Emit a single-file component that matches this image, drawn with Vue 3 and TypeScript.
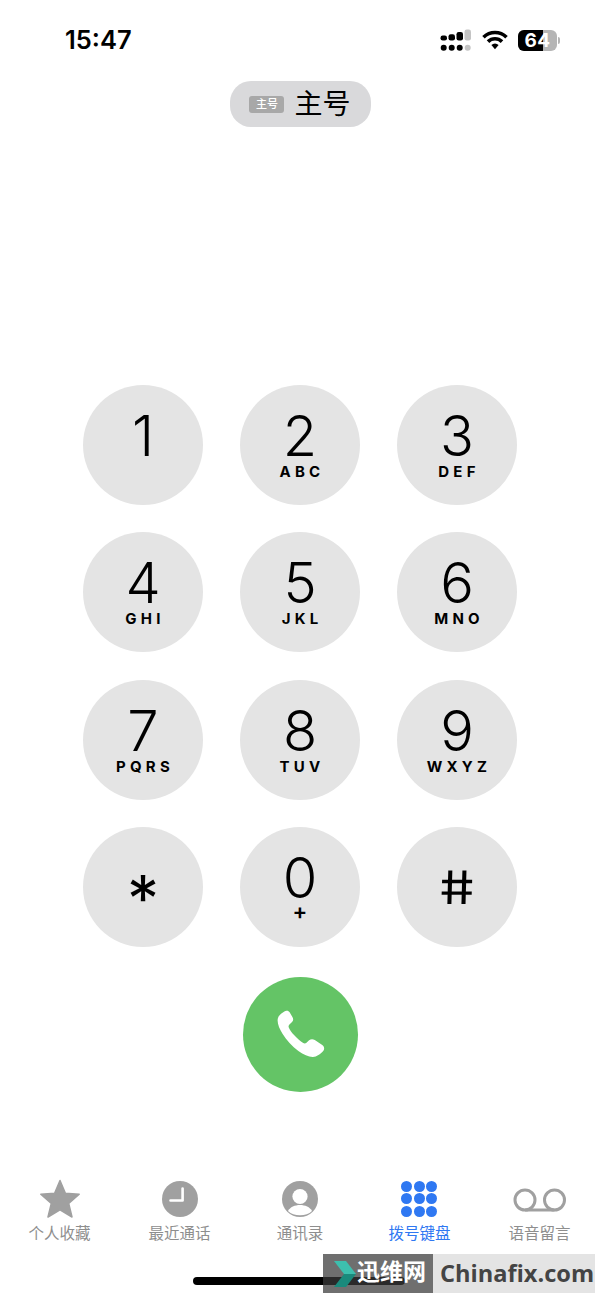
<script setup lang="ts">
interface Key { d: string; l: string; cls?: string }
const keys: Key[] = [
  { d: '1', l: '' }, { d: '2', l: 'ABC' }, { d: '3', l: 'DEF' },
  { d: '4', l: 'GHI' }, { d: '5', l: 'JKL' }, { d: '6', l: 'MNO' },
  { d: '7', l: 'PQRS' }, { d: '8', l: 'TUV' }, { d: '9', l: 'WXYZ' },
  { d: '*', l: '', cls: 'star' }, { d: '0', l: '+', cls: 'zero' }, { d: '#', l: '', cls: 'hash' }
]
const dots = [0, 1, 2, 3, 4, 5, 6, 7, 8]
</script>

<template>
  <div class="screen">
    <header class="status">
      <span class="time">15:47</span>
      <div class="status-icons">
        <svg width="32" height="23" viewBox="0 0 32 23" class="cell">
          <rect x="0.5" y="6.5" width="6.5" height="5" rx="2.2" fill="#000"/>
          <rect x="8.5" y="5.2" width="6.5" height="6.3" rx="2.2" fill="#000"/>
          <rect x="16.5" y="3" width="6.5" height="8.5" rx="2.2" fill="#000"/>
          <rect x="24.5" y="0.6" width="6.5" height="10.9" rx="2.2" fill="#c4c4c4"/>
          <circle cx="3.7" cy="18.7" r="3" fill="#000"/>
          <circle cx="11.7" cy="18.7" r="3" fill="#000"/>
          <circle cx="19.7" cy="18.7" r="3" fill="#000"/>
          <circle cx="27.7" cy="18.7" r="3" fill="#c4c4c4"/>
        </svg>
        <svg width="26" height="20" viewBox="0 0 26 20" class="wifi">
          <path d="M1.5 7.2A16.5 16.5 0 0 1 24.5 7.2" fill="none" stroke="#000" stroke-width="3.6"/>
          <path d="M6 11.6A10 10 0 0 1 20 11.6" fill="none" stroke="#000" stroke-width="3.6"/>
          <path d="M9.4 15A5 5 0 0 1 16.6 15L13 19.2Z" fill="#000"/>
        </svg>
        <div class="battery">
          <div class="batt-body"><div class="batt-fill"></div><span class="batt-num">64</span></div>
          <div class="batt-cap"></div>
        </div>
      </div>
    </header>

    <div class="pill-row">
      <div class="pill"><span class="badge">主号</span><span class="pill-text">主号</span></div>
    </div>

    <main class="pad">
      <button v-for="k in keys" :key="k.d" class="key" :class="k.cls">
        <span class="digit">{{ k.d }}</span>
        <span v-if="k.l" class="letters">{{ k.l }}</span>
      </button>
    </main>

    <div class="call-row">
      <button class="call">
        <svg width="54" height="54" viewBox="0 0 50 50">
          <path d="M11.5 3.8C9 4.9 5.6 7.4 4.6 10.2C3.4 13.8 5.6 19.6 8.8 24.8C12.5 30.8 17.6 36.6 23.5 40.8C28.4 44.3 33 46.4 37 46.3C40.4 46.2 44 43.5 46.3 41C48 39 47.6 36.8 45.6 35.3L38.7 30.6C36.8 29.4 35 29.5 33.4 30.9L31 33.2C30 34 29 34 28 33.4C25.4 31.8 22 28.8 19.5 26C17.4 23.7 15.4 20.8 14.6 18.9C14.2 17.9 14.4 17 15.2 16.2L17.4 14.2C18.8 12.9 19.1 11.3 18.1 9.4L15.4 4.9C14.5 3.4 13 3.1 11.5 3.8Z" fill="#fff"/>
        </svg>
      </button>
    </div>

    <nav class="tabs">
      <div class="tab">
        <svg width="42" height="40" viewBox="0 0 42 40" class="tab-icon">
          <path d="M21 1.5L26.4 14.2L40.2 15.3L29.7 24.4L33 38L21 30.8L9 38L12.3 24.4L1.8 15.3L15.6 14.2Z" fill="#a0a0a0" stroke="#a0a0a0" stroke-width="1.5" stroke-linejoin="round"/>
        </svg>
        <span>个人收藏</span>
      </div>
      <div class="tab">
        <svg width="42" height="40" viewBox="0 0 42 40" class="tab-icon">
          <circle cx="21" cy="20" r="18" fill="#a0a0a0"/>
          <path d="M23.6 9.5V21.5H11.5" fill="none" stroke="#fff" stroke-width="2.6" stroke-linecap="round" stroke-linejoin="round"/>
        </svg>
        <span>最近通话</span>
      </div>
      <div class="tab">
        <svg width="42" height="40" viewBox="0 0 42 40" class="tab-icon">
          <circle cx="21" cy="20" r="18" fill="#a0a0a0"/>
          <circle cx="21" cy="17.5" r="7.6" fill="#fff"/>
          <path d="M9 32C11 28 16 26 21 26C26 26 31 28 33 32C30 35 26 36.3 21 36.3C16 36.3 12 35 9 32Z" fill="#fff"/>
        </svg>
        <span>通讯录</span>
      </div>
      <div class="tab active">
        <div class="dots tab-icon"><i v-for="n in dots" :key="n"></i></div>
        <span>拨号键盘</span>
      </div>
      <div class="tab">
        <svg width="54" height="40" viewBox="0 0 54 40" class="tab-icon">
          <circle cx="12" cy="21" r="10" fill="none" stroke="#a0a0a0" stroke-width="3"/>
          <circle cx="41.5" cy="21" r="10" fill="none" stroke="#a0a0a0" stroke-width="3"/>
          <path d="M12 31H41.5" stroke="#a0a0a0" stroke-width="3"/>
        </svg>
        <span>语音留言</span>
      </div>
    </nav>

    <div class="home-bar"></div>

    <div class="watermark">
      <div class="wm-dark">
        <svg width="22" height="26" viewBox="0 0 22 26" class="wm-arrow">
          <path d="M0 0H12L22 13H10Z" fill="#3dbfae"/>
          <path d="M22 13L12 26H0L10 13Z" fill="#1a8a7c"/>
        </svg>
        <span class="wm-cn">迅维网</span>
      </div>
      <div class="wm-light">Chinafix.com</div>
    </div>
  </div>
</template>

<style scoped>
.screen {
  position: relative;
  width: 600px;
  height: 1298px;
  background: #fff;
  overflow: hidden;
  display: flex;
  flex-direction: column;
  font-family: Inter, "Noto Sans CJK SC", sans-serif;
  color: #000;
}
.status {
  height: 81px;
  box-sizing: border-box;
  padding: 25px 40px 0 65px;
  display: flex;
  justify-content: space-between;
  align-items: flex-start;
  flex: none;
}
.time {
  font-size: 25.5px;
  font-weight: 600;
  line-height: 30px;
}
.status-icons {
  display: flex;
  align-items: center;
  gap: 10px;
  height: 30px;
}
.battery { display: flex; align-items: center; gap: 1px; }
.batt-body {
  position: relative;
  width: 39px;
  height: 21px;
  border-radius: 6px;
  background: #b5b5b5;
  overflow: hidden;
  display: flex;
  align-items: center;
  justify-content: center;
}
.batt-fill {
  position: absolute;
  left: 0;
  top: 0;
  bottom: 0;
  width: 25px;
  background: #000;
}
.batt-num {
  position: relative;
  color: #fff;
  font-size: 19px;
  font-weight: 700;
  line-height: 21px;
  letter-spacing: 0.5px;
}
.batt-cap {
  width: 2px;
  height: 7px;
  border-radius: 0 2px 2px 0;
  background: #b5b5b5;
}
.pill-row {
  display: flex;
  justify-content: center;
  flex: none;
  height: 304px;
}
.pill {
  width: 141px;
  height: 46px;
  border-radius: 21px;
  background: #d9d9db;
  display: flex;
  align-items: center;
  justify-content: center;
  gap: 10px;
  box-sizing: border-box;
}
.badge {
  width: 35px;
  height: 17px;
  border-radius: 3px;
  background: #a8a8a8;
  color: #fff;
  font-size: 11px;
  font-weight: 500;
  line-height: 17px;
  text-align: center;
}
.pill-text {
  font-size: 28px;
  line-height: 46px;
}
.pad {
  display: grid;
  grid-template-columns: repeat(3, 120px);
  column-gap: 37px;
  row-gap: 27.4px;
  justify-content: center;
  flex: none;
}
.key {
  position: relative;
  width: 120px;
  height: 120px;
  border: 0;
  padding: 0;
  border-radius: 50%;
  background: #e4e4e4;
  color: #000;
  font-family: inherit;
  display: block;
}
.digit {
  display: block;
  position: absolute;
  left: 0;
  right: 0;
  top: 26px;
  text-align: center;
  font-size: 56px;
  line-height: 50px;
  font-weight: 350;
}
.letters {
  position: absolute;
  left: 0;
  right: 0;
  top: 78px;
  text-align: center;
  font-size: 15px;
  font-weight: 700;
  letter-spacing: 4.2px;
  line-height: 18px;
  text-indent: 4px;
}
.zero .letters {
  top: 77px;
  font-size: 22px;
  line-height: 14px;
  letter-spacing: 0;
  text-indent: 0;
  font-weight: 600;
}
.star .digit {
  top: 47px;
  font-size: 64px;
  font-weight: 400;
}
.hash .digit {
  top: 35px;
  font-size: 46px;
  font-weight: 400;
  transform: scaleX(1.2) skewX(8deg);
}
.call-row {
  display: flex;
  justify-content: center;
  flex: none;
  margin-top: 29.8px;
}
.call {
  width: 115px;
  height: 115px;
  border-radius: 50%;
  border: 0;
  padding: 0;
  background: #64c466;
  display: flex;
  align-items: center;
  justify-content: center;
}
.tabs {
  display: grid;
  grid-template-columns: 119px 121px 120px 119px 121px;
  margin-top: 87px;
  flex: none;
}
.tab {
  display: flex;
  flex-direction: column;
  align-items: center;
  color: #8e8e8e;
  font-size: 15.5px;
  line-height: 20px;
}
.tab-icon { display: block; height: 40px; margin-bottom: 5px; }
.tab.active { color: #2f78f2; }
.dots {
  width: 37px;
  display: grid;
  grid-template-columns: repeat(3, 11px);
  grid-auto-rows: 11px;
  gap: 1.5px;
  align-content: center;
}
.dots i {
  display: block;
  border-radius: 50%;
  background: #2f78f2;
}
.home-bar {
  position: absolute;
  left: 193px;
  top: 1277px;
  width: 212px;
  height: 8px;
  border-radius: 4px;
  background: #000;
}
.watermark {
  position: absolute;
  left: 323px;
  top: 1254px;
  width: 272px;
  height: 39px;
  display: flex;
}
.wm-dark {
  position: relative;
  width: 110px;
  background: rgba(57, 57, 57, 0.73);
  box-sizing: border-box;
  padding-left: 34px;
}
.wm-arrow {
  position: absolute;
  left: 11px;
  top: 7px;
}
.wm-cn {
  display: block;
  color: #fff;
  font-size: 23px;
  font-weight: 700;
  line-height: 37px;
  white-space: nowrap;
}
.wm-light {
  flex: 1;
  background: #e4e4e4;
  color: #444;
  font-family: "Open Sans", sans-serif;
  font-size: 23.6px;
  font-weight: 700;
  line-height: 39px;
  padding-left: 7px;
  white-space: nowrap;
}
</style>
